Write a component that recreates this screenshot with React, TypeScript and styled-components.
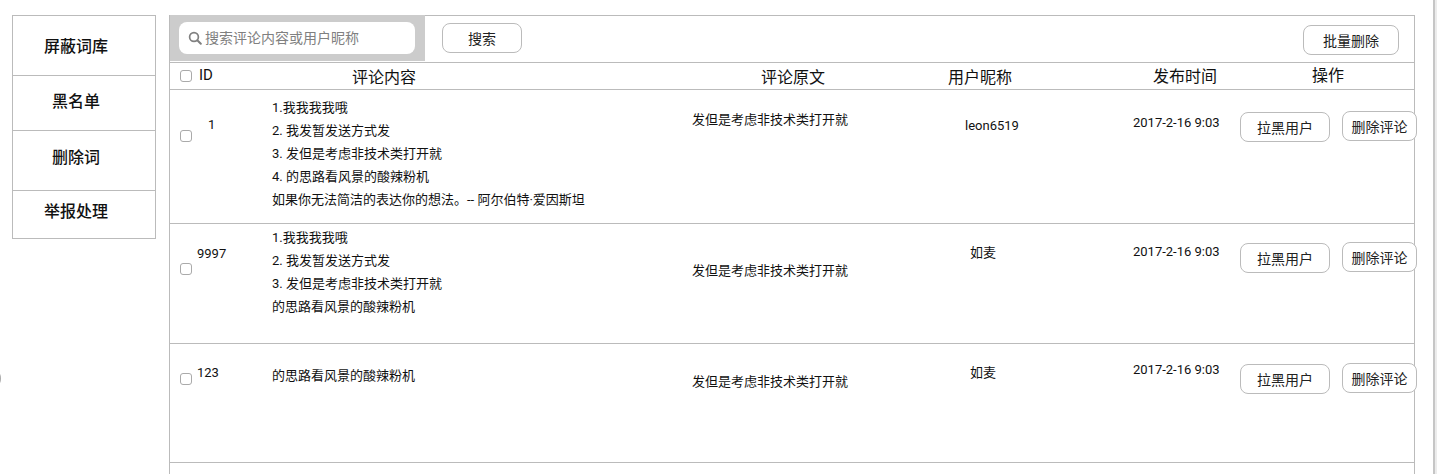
import React from 'react'
import styled, { createGlobalStyle } from 'styled-components'

const GlobalStyle = createGlobalStyle`
  html, body {
    margin: 0;
    padding: 0;
    background: #fff;
  }
  body {
    font-family: Roboto, "Noto Sans CJK SC", sans-serif;
    color: #111;
    overflow: hidden;
  }
`

const menuItems = [
  { label: '屏蔽词库', height: 60, lift: 1 },
  { label: '黑名单', height: 55, lift: 7 },
  { label: '删除词', height: 60, lift: 9 },
  { label: '举报处理', height: 48, lift: 9 },
]

const headerTitles = [
  { label: '评论内容', width: 409, top: 5 },
  { label: '评论原文', width: 187, top: 5 },
  { label: '用户昵称', width: 205, top: 5 },
  { label: '发布时间', width: 159, top: 4 },
  { label: '操作', width: 60, top: 3 },
]

const comments = [
  {
    id: '1',
    idIndent: 11,
    idTop: 25,
    checkTop: 40,
    height: 134,
    contentTop: 6,
    lines: [
      '1.我我我我哦',
      '2. 我发暂发送方式发',
      '3. 发但是考虑非技术类打开就',
      '4. 的思路看风景的酸辣粉机',
      '如果你无法简洁的表达你的想法。-- 阿尔伯特·爱因斯坦',
    ],
    originTop: 20,
    nick: 'leon6519',
    nickIndent: 0,
    nickTop: 26,
    timeTop: 23,
    blockTop: 22,
    removeTop: 21,
  },
  {
    id: '9997',
    idIndent: 0,
    idTop: 20,
    checkTop: 39,
    height: 120,
    contentTop: 2,
    lines: ['1.我我我我哦', '2. 我发暂发送方式发', '3. 发但是考虑非技术类打开就', '的思路看风景的酸辣粉机'],
    originTop: 37,
    nick: '如麦',
    nickIndent: 5,
    nickTop: 19,
    timeTop: 18,
    blockTop: 19,
    removeTop: 18,
  },
  {
    id: '123',
    idIndent: 0,
    idTop: 19,
    checkTop: 29,
    height: 119,
    contentTop: 20,
    lines: ['的思路看风景的酸辣粉机'],
    originTop: 28,
    nick: '如麦',
    nickIndent: 5,
    nickTop: 19,
    timeTop: 16,
    blockTop: 20,
    removeTop: 19,
  },
]

export default function App() {
  return (
    <Page>
      <GlobalStyle />
      <EdgeNub />
      <SideMenu>
        {menuItems.map((item) => (
          <MenuItem key={item.label} $height={item.height} $lift={item.lift}>
            {item.label}
          </MenuItem>
        ))}
      </SideMenu>

      <Panel>
        <Toolbar>
          <SearchBox>
            <SearchField>
              <svg width='14' height='14' viewBox='0 0 14 14' fill='none'>
                <circle cx='6' cy='6' r='4.4' stroke='#808080' strokeWidth='1.7' />
                <path d='M9.3 9.3L12.8 12.8' stroke='#808080' strokeWidth='2' strokeLinecap='round' />
              </svg>
              <SearchInput placeholder='搜索评论内容或用户昵称' />
            </SearchField>
          </SearchBox>
          <SearchButton>搜索</SearchButton>
          <BatchButton>批量删除</BatchButton>
        </Toolbar>

        <HeaderRow>
          <HeaderCheck>
            <Check />
            <HeaderId>ID</HeaderId>
          </HeaderCheck>
          {headerTitles.map((title) => (
            <HeaderTitle key={title.label} $width={title.width} $top={title.top}>
              {title.label}
            </HeaderTitle>
          ))}
        </HeaderRow>

        {comments.map((c) => (
          <CommentRow key={c.id} $height={c.height}>
            <CheckCell $top={c.checkTop}>
              <Check />
            </CheckCell>
            <IdCell $top={c.idTop} $indent={c.idIndent}>
              {c.id}
            </IdCell>
            <ContentCell $top={c.contentTop}>
              {c.lines.map((line) => (
                <ContentLine key={line}>{line}</ContentLine>
              ))}
            </ContentCell>
            <OriginCell $top={c.originTop}>发但是考虑非技术类打开就</OriginCell>
            <NickCell $top={c.nickTop} $indent={c.nickIndent}>
              {c.nick}
            </NickCell>
            <TimeCell $top={c.timeTop}>2017-2-16 9:03</TimeCell>
            <ActionsCell>
              <BlockButton $top={c.blockTop}>拉黑用户</BlockButton>
              <RemoveButton $top={c.removeTop}>删除评论</RemoveButton>
            </ActionsCell>
          </CommentRow>
        ))}
      </Panel>

      <ScrollEdge />
    </Page>
  )
}

const Page = styled.div`
  display: flex;
  align-items: flex-start;
  width: 1437px;
  height: 474px;
  padding: 15px 0 0 12px;
  box-sizing: border-box;
  overflow: hidden;
  position: relative;
`

const SideMenu = styled.nav`
  width: 144px;
  flex: none;
  box-sizing: border-box;
  border: 1px solid #bbb;
  border-bottom: 0;
  margin-right: 13px;
`

const MenuItem = styled.div<{ $height: number; $lift: number }>`
  height: ${({ $height }) => $height}px;
  box-sizing: border-box;
  border-bottom: 1px solid #bbb;
  display: flex;
  align-items: center;
  justify-content: center;
  font-size: 16px;
  font-weight: 500;
  padding: 0 16px ${({ $lift }) => $lift}px 0;
`

const Panel = styled.main`
  width: 1246px;
  flex: none;
  box-sizing: border-box;
  height: 459px;
  border: 1px solid #bbb;
  border-bottom: 0;
`

const Toolbar = styled.div`
  height: 47px;
  box-sizing: border-box;
  border-bottom: 1px solid #bbb;
  display: flex;
  align-items: flex-start;
`

const SearchBox = styled.div`
  width: 255px;
  height: 46px;
  margin-top: -1px;
  flex: none;
  box-sizing: border-box;
  padding: 7px 10px 0 9px;
  background: #ccc;
`

const SearchField = styled.div`
  height: 32px;
  box-sizing: border-box;
  background: #fff;
  border-radius: 8px;
  display: flex;
  align-items: center;
  padding-left: 9px;
  gap: 3px;
`

const SearchInput = styled.input`
  flex: 1;
  min-width: 0;
  border: 0;
  outline: 0;
  padding: 0;
  background: transparent;
  font-family: inherit;
  font-size: 14px;
  &::placeholder {
    color: #808080;
    opacity: 1;
  }
`

const Button = styled.button`
  box-sizing: border-box;
  flex: none;
  height: 30px;
  padding: 0;
  background: #fff;
  border: 1px solid #bbb;
  border-radius: 8px;
  font-family: inherit;
  font-size: 14px;
  color: #222;
`

const SearchButton = styled(Button)`
  width: 80px;
  margin: 7px 0 0 17px;
`

const BatchButton = styled(Button)`
  width: 96px;
  margin: 9px 15px 0 auto;
`

const HeaderRow = styled.div`
  height: 27px;
  box-sizing: border-box;
  border-bottom: 1px solid #bbb;
  display: flex;
  font-size: 16px;
  line-height: 20px;
`

const HeaderCheck = styled.div`
  width: 182px;
  height: 26px;
  flex: none;
  box-sizing: border-box;
  display: flex;
  align-items: center;
  padding-left: 10px;
  gap: 7px;
`

const HeaderId = styled.span`
  font-size: 15px;
  margin-top: -2px;
`

const HeaderTitle = styled.div<{ $width: number; $top: number }>`
  flex: none;
  width: ${({ $width }) => $width}px;
  padding-top: ${({ $top }) => $top}px;
`

const Check = styled.span`
  display: block;
  width: 12px;
  height: 12px;
  box-sizing: border-box;
  border: 1px solid #aaa;
  border-radius: 3px;
  background: #fff;
`

const CommentRow = styled.div<{ $height: number }>`
  height: ${({ $height }) => $height}px;
  box-sizing: border-box;
  border-bottom: 1px solid #bbb;
  padding-left: 10px;
  display: grid;
  grid-template-columns: 17px 75px 420px 273px 168px 107px 1fr;
  font-size: 13px;
  line-height: 20px;
`

const CheckCell = styled.div<{ $top: number }>`
  padding-top: ${({ $top }) => $top}px;
`

const IdCell = styled.div<{ $top: number; $indent: number }>`
  padding-top: ${({ $top }) => $top}px;
  padding-left: ${({ $indent }) => $indent}px;
`

const ContentCell = styled.div<{ $top: number }>`
  padding-top: ${({ $top }) => $top}px;
`

const ContentLine = styled.div`
  height: 23px;
  line-height: 23px;
  white-space: nowrap;
`

const OriginCell = styled.div<{ $top: number }>`
  padding-top: ${({ $top }) => $top}px;
  white-space: nowrap;
`

const NickCell = styled.div<{ $top: number; $indent: number }>`
  padding-top: ${({ $top }) => $top}px;
  padding-left: ${({ $indent }) => $indent}px;
`

const TimeCell = styled.div<{ $top: number }>`
  padding-top: ${({ $top }) => $top}px;
  white-space: nowrap;
`

const ActionsCell = styled.div`
  display: flex;
  align-items: flex-start;
  gap: 12px;
`

const BlockButton = styled(Button)<{ $top: number }>`
  width: 90px;
  margin-top: ${({ $top }) => $top}px;
`

const RemoveButton = styled(Button)<{ $top: number }>`
  width: 75px;
  margin-top: ${({ $top }) => $top}px;
`

const ScrollEdge = styled.div`
  position: absolute;
  top: 0;
  right: 0;
  bottom: 0;
  width: 2px;
  border-left: 2px solid #c6c6c6;
  background: #ececec;
`

const EdgeNub = styled.div`
  position: absolute;
  left: -4px;
  top: 373px;
  width: 5px;
  height: 11px;
  border-radius: 50%;
  background: #aaa;
`
